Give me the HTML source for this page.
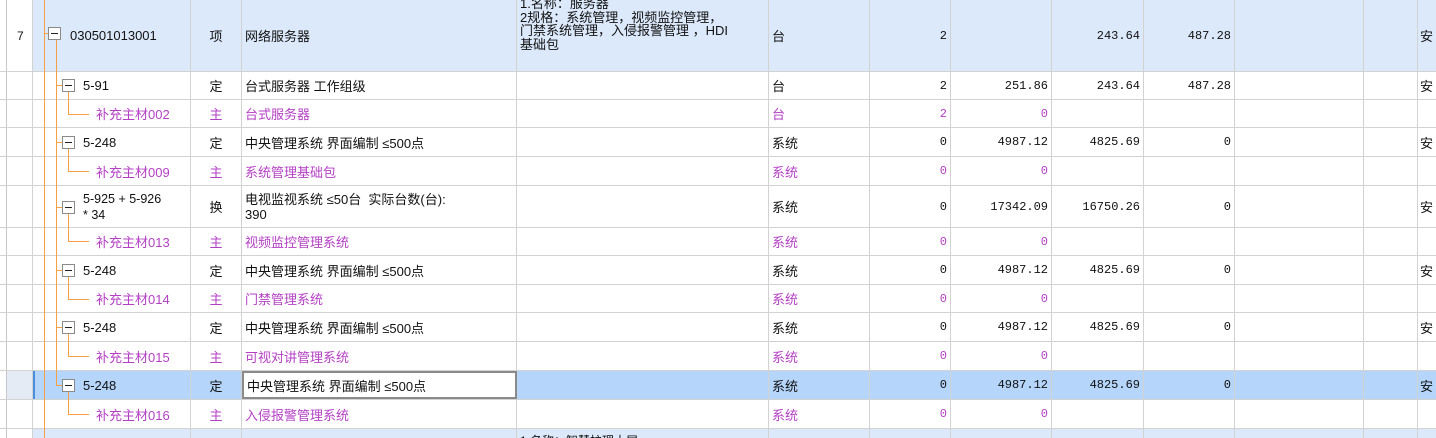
<!DOCTYPE html>
<html><head><meta charset="utf-8"><style>
*{box-sizing:border-box;margin:0;padding:0}
html,body{width:1436px;height:438px;overflow:hidden}
body{background:#fff;font-family:"Liberation Sans","Noto Sans CJK SC",sans-serif;font-size:13px;color:#111;position:relative}
.r{position:absolute;left:0;width:1436px;display:flex;border-bottom:1px solid #d2d2d2}
.c{border-right:1px solid #d2d2d2;height:100%;display:flex;align-items:center;white-space:nowrap;overflow:hidden}
.c0{width:7px;border-right:1px solid #c8c8c8;background:#fff}
.c1{width:26px;background:#fff;padding-left:10px;font-size:12px}
.c2{width:158px}
.c3{width:51px;justify-content:center}
.c4{width:275px;padding-left:3px}
.c5{width:252px;padding-left:3px}
.c6{width:101px;padding-left:3px}
.c7,.c8,.c9,.c10{justify-content:flex-end;padding-right:3px;font-family:"Liberation Mono",monospace;font-size:12px}
.c7{width:81px}.c8{width:101px}.c9{width:92px}.c10{width:91px}
.c11{width:129px}
.c12{width:54px}
.c13{width:18px;border-right:none;padding-left:2px}
.p{color:#b43fc4}
.l0{padding-left:37px}.l1{padding-left:50px}.l2{padding-left:63px}
.hl{background:#dce9fb}
.o{position:absolute;background:#f5a044}
.b{position:absolute;width:13px;height:13px;border:1px solid #8a8a8a;background:#fff}
.b::after{content:"";position:absolute;left:2px;right:2px;top:5px;height:1px;background:#222}
</style></head><body>

<div class="r hl" style="top:0;height:72px"><div class="c c0"></div><div class="c c1">7</div><div class="c c2 l0">030501013001</div><div class="c c3">项</div><div class="c c4">网络服务器</div><div class="c c5" style="line-height:13.5px;font-size:13px;align-items:flex-start;padding-top:0;margin-top:-3px;height:75px">1.名称：服务器<br>2规格：系统管理，视频监控管理，<br>门禁系统管理，入侵报警管理 ，HDI<br>基础包</div><div class="c c6">台</div><div class="c c7">2</div><div class="c c8"></div><div class="c c9">243.64</div><div class="c c10">487.28</div><div class="c c11"></div><div class="c c12"></div><div class="c c13">安</div></div>

<div class="r" style="top:72px;height:28px"><div class="c c0"></div><div class="c c1"></div><div class="c c2 l1">5-91</div><div class="c c3">定</div><div class="c c4">台式服务器 工作组级</div><div class="c c5"></div><div class="c c6">台</div><div class="c c7">2</div><div class="c c8">251.86</div><div class="c c9">243.64</div><div class="c c10">487.28</div><div class="c c11"></div><div class="c c12"></div><div class="c c13">安</div></div>

<div class="r p" style="top:100px;height:28px"><div class="c c0"></div><div class="c c1"></div><div class="c c2 l2">补充主材002</div><div class="c c3">主</div><div class="c c4">台式服务器</div><div class="c c5"></div><div class="c c6">台</div><div class="c c7">2</div><div class="c c8">0</div><div class="c c9"></div><div class="c c10"></div><div class="c c11"></div><div class="c c12"></div><div class="c c13"></div></div>

<div class="r" style="top:128px;height:29px"><div class="c c0"></div><div class="c c1"></div><div class="c c2 l1">5-248</div><div class="c c3">定</div><div class="c c4">中央管理系统 界面编制 ≤500点</div><div class="c c5"></div><div class="c c6">系统</div><div class="c c7">0</div><div class="c c8">4987.12</div><div class="c c9">4825.69</div><div class="c c10">0</div><div class="c c11"></div><div class="c c12"></div><div class="c c13">安</div></div>

<div class="r p" style="top:157px;height:29px"><div class="c c0"></div><div class="c c1"></div><div class="c c2 l2">补充主材009</div><div class="c c3">主</div><div class="c c4">系统管理基础包</div><div class="c c5"></div><div class="c c6">系统</div><div class="c c7">0</div><div class="c c8">0</div><div class="c c9"></div><div class="c c10"></div><div class="c c11"></div><div class="c c12"></div><div class="c c13"></div></div>

<div class="r" style="top:186px;height:42px"><div class="c c0"></div><div class="c c1"></div><div class="c c2 l1" style="line-height:16px;font-size:12.5px">5-925 + 5-926<br>* 34</div><div class="c c3">换</div><div class="c c4" style="line-height:15px">电视监视系统 ≤50台 &nbsp;实际台数(台):<br>390</div><div class="c c5"></div><div class="c c6">系统</div><div class="c c7">0</div><div class="c c8">17342.09</div><div class="c c9">16750.26</div><div class="c c10">0</div><div class="c c11"></div><div class="c c12"></div><div class="c c13">安</div></div>

<div class="r p" style="top:228px;height:28px"><div class="c c0"></div><div class="c c1"></div><div class="c c2 l2">补充主材013</div><div class="c c3">主</div><div class="c c4">视频监控管理系统</div><div class="c c5"></div><div class="c c6">系统</div><div class="c c7">0</div><div class="c c8">0</div><div class="c c9"></div><div class="c c10"></div><div class="c c11"></div><div class="c c12"></div><div class="c c13"></div></div>

<div class="r" style="top:256px;height:29px"><div class="c c0"></div><div class="c c1"></div><div class="c c2 l1">5-248</div><div class="c c3">定</div><div class="c c4">中央管理系统 界面编制 ≤500点</div><div class="c c5"></div><div class="c c6">系统</div><div class="c c7">0</div><div class="c c8">4987.12</div><div class="c c9">4825.69</div><div class="c c10">0</div><div class="c c11"></div><div class="c c12"></div><div class="c c13">安</div></div>

<div class="r p" style="top:285px;height:28px"><div class="c c0"></div><div class="c c1"></div><div class="c c2 l2">补充主材014</div><div class="c c3">主</div><div class="c c4">门禁管理系统</div><div class="c c5"></div><div class="c c6">系统</div><div class="c c7">0</div><div class="c c8">0</div><div class="c c9"></div><div class="c c10"></div><div class="c c11"></div><div class="c c12"></div><div class="c c13"></div></div>

<div class="r" style="top:313px;height:29px"><div class="c c0"></div><div class="c c1"></div><div class="c c2 l1">5-248</div><div class="c c3">定</div><div class="c c4">中央管理系统 界面编制 ≤500点</div><div class="c c5"></div><div class="c c6">系统</div><div class="c c7">0</div><div class="c c8">4987.12</div><div class="c c9">4825.69</div><div class="c c10">0</div><div class="c c11"></div><div class="c c12"></div><div class="c c13">安</div></div>

<div class="r p" style="top:342px;height:29px"><div class="c c0"></div><div class="c c1"></div><div class="c c2 l2">补充主材015</div><div class="c c3">主</div><div class="c c4">可视对讲管理系统</div><div class="c c5"></div><div class="c c6">系统</div><div class="c c7">0</div><div class="c c8">0</div><div class="c c9"></div><div class="c c10"></div><div class="c c11"></div><div class="c c12"></div><div class="c c13"></div></div>

<div class="r" style="top:371px;height:29px;background:#b5d5fb"><div class="c c0"></div><div class="c c1" style="background:#e4ebf5"></div><div class="c c2" style="border-left:2px solid #4a8fdc;padding-left:48px">5-248</div><div class="c c3">定</div><div class="c c4" style="background:#fff;border:2px solid #8a8a8a">中央管理系统 界面编制 ≤500点</div><div class="c c5"></div><div class="c c6">系统</div><div class="c c7">0</div><div class="c c8">4987.12</div><div class="c c9">4825.69</div><div class="c c10">0</div><div class="c c11"></div><div class="c c12"></div><div class="c c13">安</div></div>

<div class="r p" style="top:400px;height:29px"><div class="c c0"></div><div class="c c1"></div><div class="c c2 l2">补充主材016</div><div class="c c3">主</div><div class="c c4">入侵报警管理系统</div><div class="c c5"></div><div class="c c6">系统</div><div class="c c7">0</div><div class="c c8">0</div><div class="c c9"></div><div class="c c10"></div><div class="c c11"></div><div class="c c12"></div><div class="c c13"></div></div>

<div class="r hl" style="top:429px;height:20px;border-bottom:none"><div class="c c0"></div><div class="c c1" style="background:#fff"></div><div class="c c2"></div><div class="c c3"></div><div class="c c4"></div><div class="c c5" style="align-items:flex-start;padding-top:3px;font-size:12px">1.名称：智慧护理大屏</div><div class="c c6"></div><div class="c c7"></div><div class="c c8"></div><div class="c c9"></div><div class="c c10"></div><div class="c c11"></div><div class="c c12"></div><div class="c c13"></div></div>

<div class="o" style="left:44px;top:0;width:1px;height:438px"></div>
<div class="o" style="left:44px;top:33px;width:4px;height:1px"></div>
<div class="o" style="left:56px;top:40px;width:1px;height:345px"></div>
<div class="b" style="left:48px;top:27px"></div>
<div class="o" style="left:56px;top:85px;width:6px;height:1px"></div><div class="b" style="left:62px;top:79px"></div>
<div class="o" style="left:68px;top:92px;width:1px;height:22px"></div><div class="o" style="left:68px;top:114px;width:21px;height:1px"></div>
<div class="o" style="left:56px;top:142px;width:6px;height:1px"></div><div class="b" style="left:62px;top:136px"></div>
<div class="o" style="left:68px;top:149px;width:1px;height:23px"></div><div class="o" style="left:68px;top:171px;width:21px;height:1px"></div>
<div class="o" style="left:56px;top:207px;width:6px;height:1px"></div><div class="b" style="left:62px;top:201px"></div>
<div class="o" style="left:68px;top:214px;width:1px;height:28px"></div><div class="o" style="left:68px;top:241px;width:21px;height:1px"></div>
<div class="o" style="left:56px;top:270px;width:6px;height:1px"></div><div class="b" style="left:62px;top:264px"></div>
<div class="o" style="left:68px;top:277px;width:1px;height:22px"></div><div class="o" style="left:68px;top:299px;width:21px;height:1px"></div>
<div class="o" style="left:56px;top:327px;width:6px;height:1px"></div><div class="b" style="left:62px;top:321px"></div>
<div class="o" style="left:68px;top:334px;width:1px;height:23px"></div><div class="o" style="left:68px;top:356px;width:21px;height:1px"></div>
<div class="o" style="left:56px;top:385px;width:6px;height:1px"></div><div class="b" style="left:62px;top:379px"></div>
<div class="o" style="left:68px;top:392px;width:1px;height:22px"></div><div class="o" style="left:68px;top:414px;width:21px;height:1px"></div>
</body></html>
